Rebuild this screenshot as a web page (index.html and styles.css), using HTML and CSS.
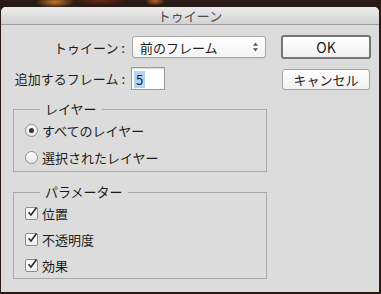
FILE: index.html
```html
<!DOCTYPE html>
<html lang="ja">
<head>
    <meta charset="UTF-8">
    <title>トゥイーン</title>
    <link rel="stylesheet" href="styles.css">
</head>
<body>

<div class="window">
    <div class="titlebar">トゥイーン</div>
    <div class="content">
        <div class="form">
            <div class="row">
                <label class="label">トゥイーン :</label>
                <div class="popup">
                    <span>前のフレーム</span>
                    <svg class="arrows" width="7" height="10" viewBox="0 0 7 10">
                        <path d="M3.5 0.5 L6 3.8 L1 3.8 Z M3.5 9.5 L6 6.2 L1 6.2 Z" fill="#555"/>
                    </svg>
                </div>
            </div>
            <div class="row row-frames">
                <label class="label">追加するフレーム :</label>
                <div class="num-input"><span class="selected">5</span></div>
            </div>

            <fieldset class="group">
                <legend>レイヤー</legend>
                <div class="option"><span class="radio checked"></span>すべてのレイヤー</div>
                <div class="option"><span class="radio"></span>選択されたレイヤー</div>
            </fieldset>

            <fieldset class="group group-params">
                <legend>パラメーター</legend>
                <div class="option check-row"><span class="checkbox"><svg width="12" height="12" viewBox="0 0 12 12"><path d="M2.5 6.2 L5 9 L10.5 1.5" fill="none" stroke="#2b2b2b" stroke-width="1.6"/></svg></span>位置</div>
                <div class="option check-row"><span class="checkbox"><svg width="12" height="12" viewBox="0 0 12 12"><path d="M2.5 6.2 L5 9 L10.5 1.5" fill="none" stroke="#2b2b2b" stroke-width="1.6"/></svg></span>不透明度</div>
                <div class="option check-row"><span class="checkbox"><svg width="12" height="12" viewBox="0 0 12 12"><path d="M2.5 6.2 L5 9 L10.5 1.5" fill="none" stroke="#2b2b2b" stroke-width="1.6"/></svg></span>効果</div>
            </fieldset>
        </div>

        <div class="buttons">
            <button class="btn btn-default">OK</button>
            <button class="btn btn-cancel">キャンセル</button>
        </div>
    </div>
</div>

</body>
</html>
```

FILE: styles.css
```css
html, body {
    margin: 0;
    padding: 0;
    height: 294px;
    overflow: hidden;
}
body {
    font-family: "Noto Sans CJK JP", "Noto Sans", sans-serif;
    font-size: 13px;
    color: #1c1c1c;
    background:
        radial-gradient(ellipse 20px 6px at 55px 2px, #c8742a, transparent),
        radial-gradient(ellipse 10px 5px at 155px 1px, #b8662a, transparent),
        radial-gradient(ellipse 30px 6px at 100px 0px, #6a2a14, transparent),
        #2a1a16;
}
.window {
    margin: 7px 0 0 1px;
    width: 378px;
    height: 285px;
    background: #dcdcdc;
    border-radius: 5px 5px 0 0;
    overflow: hidden;
}
.titlebar {
    height: 17px;
    line-height: 17px;
    text-align: center;
    color: #4a4a4a;
    background: linear-gradient(#ebebeb, #d3d3d3);
    border-bottom: 1px solid #9c9c9c;
}
.content {
    display: flex;
    padding: 10px 0 0 8px;
}
.form {
    width: 258px;
}
.row {
    display: flex;
    align-items: center;
    height: 24px;
}
.row-frames {
    margin-top: 7px;
}
.label {
    width: 116px;
    text-align: right;
    padding-right: 6px;
    white-space: nowrap;
}
.popup {
    box-sizing: border-box;
    width: 134px;
    height: 22px;
    margin-left: 1px;
    display: flex;
    align-items: center;
    justify-content: space-between;
    padding: 0 6px 0 7px;
    background: linear-gradient(#ffffff, #f3f3f3);
    border: 1px solid #a6a6a6;
    border-radius: 3px;
    box-shadow: 0 1px 0 rgba(0, 0, 0, 0.05);
}
.num-input {
    box-sizing: border-box;
    width: 34px;
    height: 23px;
    padding: 2px 0 0 2px;
    background: #fff;
    border: 1px solid #9a9a9a;
    box-shadow: inset 0 1px 1px rgba(0, 0, 0, 0.15);
}
.selected {
    display: inline-block;
    background: #b4d3f7;
    padding: 0 2px;
    line-height: 17px;
    color: #123;
}
.group {
    box-sizing: border-box;
    width: 254px;
    margin: 11px 0 0 4px;
    padding: 0 0 0 11px;
    border: 1px solid #a9a9a9;
    min-width: 0;
}
.group legend {
    margin-left: 15px;
    padding: 0 5px 0 5px;
    line-height: 16px;
}
.group-params {
    margin-top: 12px;
}
.option {
    display: flex;
    align-items: center;
    height: 27px;
}
.check-row {
    height: 26px;
}
.radio {
    box-sizing: border-box;
    width: 13px;
    height: 13px;
    border-radius: 50%;
    border: 1px solid #8d8d8d;
    background: linear-gradient(#ffffff, #e6e6e6);
    margin-right: 4px;
    display: flex;
    align-items: center;
    justify-content: center;
}
.radio.checked::after {
    content: "";
    width: 5px;
    height: 5px;
    border-radius: 50%;
    background: #333;
}
.checkbox {
    box-sizing: border-box;
    width: 13px;
    height: 13px;
    border: 1px solid #8d8d8d;
    border-radius: 2px;
    background: linear-gradient(#ffffff, #ececec);
    margin-right: 4px;
    display: flex;
    align-items: center;
    justify-content: center;
}
.checkbox svg {
    margin-top: -2px;
    margin-left: 1px;
    overflow: visible;
}
.buttons {
    display: flex;
    flex-direction: column;
    margin-left: 14px;
}
.btn {
    font-family: inherit;
    font-size: 13px;
    color: #1c1c1c;
    background: linear-gradient(#ffffff, #f1f1f1);
    border-radius: 3px;
    padding: 0;
    cursor: pointer;
}
.btn-default {
    width: 90px;
    height: 24px;
    border: 2px solid #767676;
    font-size: 14px;
}
.btn-cancel {
    width: 88px;
    height: 21px;
    margin: 10px 0 0 1px;
    border: 1px solid #a3a3a3;
}
```
